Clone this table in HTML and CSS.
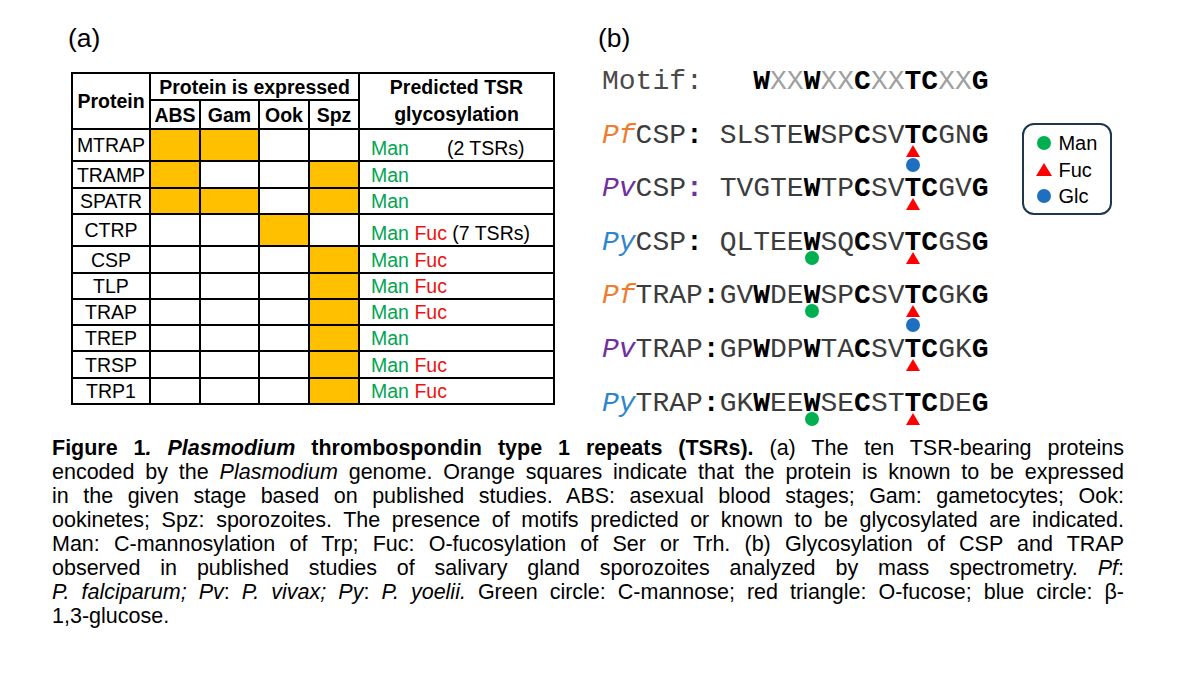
FILE: index.html
```html
<!DOCTYPE html>
<html lang="en">
<head>
<meta charset="utf-8">
<title>Figure 1</title>
<link rel="stylesheet" href="styles.css">
</head>
<body>
<div class="page">
  <div class="figure">
    <section class="panel-a">
      <div class="plabel">(a)</div>
      <table class="expr">
        <colgroup>
          <col class="c-prot"><col class="c-abs"><col class="c-gam"><col class="c-ook"><col class="c-spz"><col class="c-gly">
        </colgroup>
        <thead>
          <tr class="h1">
            <th rowspan="2">Protein</th>
            <th colspan="4">Protein is expressed</th>
            <th rowspan="2" class="pred">Predicted TSR<br>glycosylation</th>
          </tr>
          <tr class="h2"><th>ABS</th><th>Gam</th><th>Ook</th><th>Spz</th></tr>
        </thead>
        <tbody>
          <tr class="r32"><td class="name">MTRAP</td><td class="on"></td><td class="on"></td><td></td><td></td><td class="gly"><span class="man">Man</span><span class="note">(2 TSRs)</span></td></tr>
          <tr class="r27"><td class="name">TRAMP</td><td class="on"></td><td></td><td></td><td class="on"></td><td class="gly"><span class="man">Man</span></td></tr>
          <tr class="r26"><td class="name">SPATR</td><td class="on"></td><td class="on"></td><td></td><td class="on"></td><td class="gly"><span class="man">Man</span></td></tr>
          <tr class="r32"><td class="name">CTRP</td><td></td><td></td><td class="on"></td><td></td><td class="gly"><span class="man">Man</span> <span class="fuc">Fuc</span> (7 TSRs)</td></tr>
          <tr class="r27"><td class="name">CSP</td><td></td><td></td><td></td><td class="on"></td><td class="gly"><span class="man">Man</span> <span class="fuc">Fuc</span></td></tr>
          <tr class="r26"><td class="name">TLP</td><td></td><td></td><td></td><td class="on"></td><td class="gly"><span class="man">Man</span> <span class="fuc">Fuc</span></td></tr>
          <tr class="r26"><td class="name">TRAP</td><td></td><td></td><td></td><td class="on"></td><td class="gly"><span class="man">Man</span> <span class="fuc">Fuc</span></td></tr>
          <tr class="r26"><td class="name">TREP</td><td></td><td></td><td></td><td class="on"></td><td class="gly"><span class="man">Man</span></td></tr>
          <tr class="r27"><td class="name">TRSP</td><td></td><td></td><td></td><td class="on"></td><td class="gly"><span class="man">Man</span> <span class="fuc">Fuc</span></td></tr>
          <tr class="r26"><td class="name">TRP1</td><td></td><td></td><td></td><td class="on"></td><td class="gly"><span class="man">Man</span> <span class="fuc">Fuc</span></td></tr>
        </tbody>
      </table>
    </section>

    <section class="panel-b">
      <div class="plabel">(b)</div>
      <div class="seqwrap">
        <div class="seqs">
          <div class="seq"><span class="lbl">Motif:</span>   <b>W</b><span class="x">XX</span><b>W</b><span class="x">XX</span><b>C</b><span class="x">XX</span><b>TC</b><span class="x">XX</span><b>G</b></div>
          <div class="seq"><i class="pf">Pf</i>CSP<b>:</b> SLSTE<b>W</b>SP<b>C</b>SV<b>TC</b>GN<b>G</b><span class="mk tri c18"><svg width="14" height="12" viewBox="0 0 14 12"><polygon points="7,0 14,12 0,12" fill="#ff0000"/></svg></span><span class="mk dot glc low c18"></span></div>
          <div class="seq"><i class="pv">Pv</i>CSP<b class="pv">:</b> TVGTE<b>W</b>TP<b>C</b>SV<b>TC</b>GV<b>G</b><span class="mk tri c18"><svg width="14" height="12" viewBox="0 0 14 12"><polygon points="7,0 14,12 0,12" fill="#ff0000"/></svg></span></div>
          <div class="seq"><i class="py">Py</i>CSP<b>:</b> QLTEE<b>W</b>SQ<b>C</b>SV<b>TC</b>GS<b>G</b><span class="mk dot man-dot c12"></span><span class="mk tri c18"><svg width="14" height="12" viewBox="0 0 14 12"><polygon points="7,0 14,12 0,12" fill="#ff0000"/></svg></span></div>
          <div class="seq"><i class="pf">Pf</i>TRAP<b>:</b>GV<b>W</b>DE<b>W</b>SP<b>C</b>SV<b>TC</b>GK<b>G</b><span class="mk dot man-dot c12"></span><span class="mk tri c18"><svg width="14" height="12" viewBox="0 0 14 12"><polygon points="7,0 14,12 0,12" fill="#ff0000"/></svg></span><span class="mk dot glc low c18"></span></div>
          <div class="seq"><i class="pv">Pv</i>TRAP<b>:</b>GP<b>W</b>DP<b>W</b>TA<b>C</b>SV<b>TC</b>GK<b>G</b><span class="mk tri c18"><svg width="14" height="12" viewBox="0 0 14 12"><polygon points="7,0 14,12 0,12" fill="#ff0000"/></svg></span></div>
          <div class="seq"><i class="py">Py</i>TRAP<b>:</b>GK<b>W</b>EE<b>W</b>SE<b>C</b>ST<b>TC</b>DE<b>G</b><span class="mk dot man-dot c12"></span><span class="mk tri c18"><svg width="14" height="12" viewBox="0 0 14 12"><polygon points="7,0 14,12 0,12" fill="#ff0000"/></svg></span></div>
        </div>
        <div class="legend">
          <div class="lg-item"><span class="lg-mark"><span class="lg-dot man-bg"></span></span>Man</div>
          <div class="lg-item"><span class="lg-mark"><svg width="16" height="13" viewBox="0 0 16 13"><polygon points="8,0 16,13 0,13" fill="#ff0000"/></svg></span>Fuc</div>
          <div class="lg-item"><span class="lg-mark"><span class="lg-dot glc-bg"></span></span>Glc</div>
        </div>
      </div>
    </section>
  </div>

  <div class="caption">
    <div class="cl"><b>Figure 1</b><b><i>. Plasmodium</i></b><b> thrombospondin type 1 repeats (TSRs).</b> (a) The ten TSR-bearing proteins</div>
    <div class="cl">encoded by the <i>Plasmodium</i> genome. Orange squares indicate that the protein is known to be expressed</div>
    <div class="cl">in the given stage based on published studies. ABS: asexual blood stages; Gam: gametocytes; Ook:</div>
    <div class="cl">ookinetes; Spz: sporozoites. The presence of motifs predicted or known to be glycosylated are indicated.</div>
    <div class="cl">Man: C-mannosylation of Trp; Fuc: O-fucosylation of Ser or Trh. (b) Glycosylation of CSP and TRAP</div>
    <div class="cl">observed in published studies of salivary gland sporozoites analyzed by mass spectrometry. <i>Pf</i>:</div>
    <div class="cl"><i>P. falciparum; Pv</i>: <i>P. vivax; Py</i>: <i>P. yoelii.</i> Green circle: C-mannose; red triangle: O-fucose; blue circle: β-</div>
    <div class="cl last">1,3-glucose.</div>
  </div>
</div>
</body>
</html>
```

FILE: styles.css
```css
html, body {
  margin: 0;
  padding: 0;
  background: #ffffff;
}

body {
  font-family: "Liberation Sans", Arial, sans-serif;
  color: #000;
}

.page {
  width: 1200px;
  height: 675px;
  overflow: hidden;
}

.figure {
  display: flex;
  padding-left: 68px;
  padding-top: 24px;
}

.plabel {
  font-family: "Liberation Sans", Arial, sans-serif;
  font-size: 26.5px;
  line-height: 29px;
  height: 29px;
}

/* ---------- panel (a) ---------- */
.panel-a {
  width: 530px;
  flex: none;
}

.expr {
  margin-top: 19px;
  margin-left: 3px;
  border-collapse: collapse;
  table-layout: fixed;
  width: 484px;
  font-size: 19.5px;
  border: 2px solid #000;
}

.c-prot { width: 78px; }
.c-abs { width: 50px; }
.c-gam { width: 59px; }
.c-ook { width: 50px; }
.c-spz { width: 50px; }
.c-gly { width: 195px; }

.expr th,
.expr td {
  border: 2px solid #000;
  padding: 0;
  line-height: 22px;
}

.expr th {
  font-weight: bold;
  text-align: center;
  vertical-align: middle;
  white-space: nowrap;
}

.expr th.pred {
  line-height: 27px;
}

.h1 { height: 27px; }
.h2 { height: 28px; }
.r32 { height: 32px; }
.r27 { height: 27px; }
.r26 { height: 26px; }

.expr td.name {
  text-align: center;
  vertical-align: middle;
}

.expr td.on {
  background: #ffc000;
}

.expr td.gly {
  text-align: left;
  vertical-align: bottom;
  padding-left: 11px;
  padding-bottom: 1px;
  white-space: nowrap;
}

.man { color: #00a550; }
.fuc { color: #ee1111; }
.note { margin-left: 38px; }

/* ---------- panel (b) ---------- */
.panel-b {
  flex: none;
}

.seqwrap {
  display: flex;
  align-items: flex-start;
  margin-top: 2px;
  margin-left: 4px;
}

.seqs {
  display: flex;
  flex-direction: column;
  width: 23ch;
  font-family: "Courier New", Courier, "Nimbus Mono PS", "Nimbus Mono L", FreeMono, "Liberation Mono", monospace;
  font-size: 28px;
}

.seq {
  position: relative;
  height: 53.6px;
  line-height: 53.6px;
  white-space: pre;
  color: #3c3c3c;
}

.seq b {
  color: #000;
  font-weight: bold;
}

.seq .lbl { color: #4a4a4a; }
.seq .x { color: #a0a0a0; }

.seq i { font-style: italic; }
.pf { color: #ed7d31; }
.seq b.pv, .pv { color: #7030a0; }
.py { color: #2e86c9; }

.mk {
  position: absolute;
  display: block;
  line-height: 0;
}

.mk.tri { top: 36px; }
.mk.dot {
  width: 14px;
  height: 14px;
  border-radius: 50%;
  top: 35px;
}
.mk.low { top: 49px; }

.c12 { left: calc(12.5ch - 7px); }
.c18 { left: calc(18.5ch - 7px); }

.man-dot { background: #00b050; }
.glc { background: #1f6fc0; }

.legend {
  flex: none;
  margin-left: 34px;
  margin-top: 68px;
  border: 2px solid #1f3550;
  border-radius: 12px;
  padding: 5px 0 0 12px;
  box-sizing: border-box;
  width: 90px;
  height: 92px;
  font-family: "Liberation Sans", Arial, sans-serif;
  font-size: 20px;
}

.lg-item {
  display: flex;
  align-items: center;
  height: 26.5px;
  line-height: 26.5px;
}

.lg-mark {
  width: 16px;
  display: flex;
  justify-content: center;
  align-items: center;
  margin-right: 6px;
}

.lg-dot {
  width: 14px;
  height: 14px;
  border-radius: 50%;
  display: block;
}

.man-bg { background: #00b050; }
.glc-bg { background: #1f6fc0; }

/* ---------- caption ---------- */
.caption {
  margin-left: 52px;
  margin-top: 6px;
  width: 1072px;
  font-size: 21.5px;
  line-height: 24px;
}

.cl {
  text-align: justify;
  text-align-last: justify;
  white-space: nowrap;
}

.cl.last {
  text-align: left;
  text-align-last: left;
}
```
